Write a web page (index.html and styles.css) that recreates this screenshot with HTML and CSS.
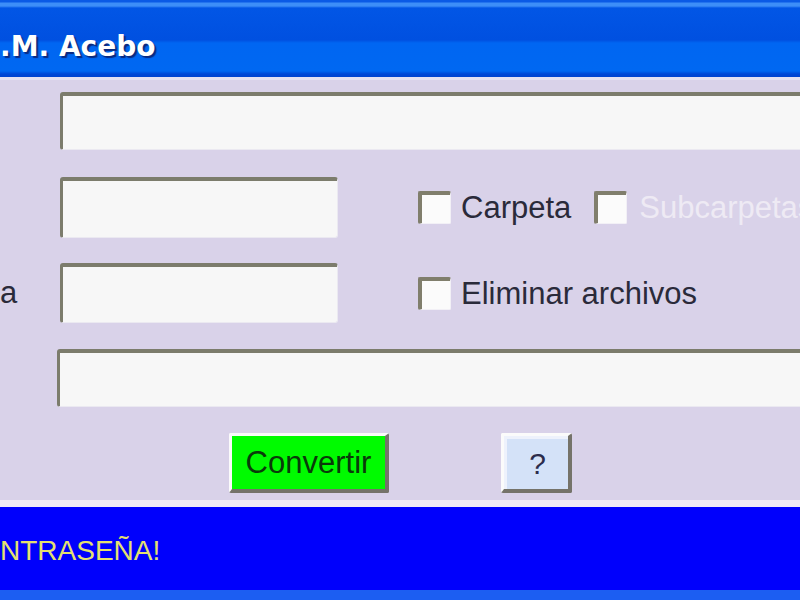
FILE: index.html
```html
<!DOCTYPE html>
<html>
<head>
<meta charset="utf-8">
<link rel="stylesheet" href="styles.css">
</head>
<body>
<div class="window">
  <div class="titlebar"><span class="title">.M. Acebo</span></div>
  <div class="content">
    <div class="row row1">
      <div class="field wide"></div>
    </div>
    <div class="row row2">
      <div class="field short"></div>
      <span class="check first"></span><span class="lbl">Carpeta</span>
      <span class="check second"></span><span class="lbl disabled">Subcarpetas</span>
    </div>
    <div class="row row3">
      <span class="side">a</span>
      <div class="field short"></div>
      <span class="check first"></span><span class="lbl">Eliminar archivos</span>
    </div>
    <div class="row row4">
      <div class="field wide"></div>
    </div>
    <div class="row buttons">
      <button class="btn convert">Convertir</button>
      <button class="btn help"><span class="help-inner">?</span></button>
    </div>
  </div>
  <div class="status"><span class="status-text">NTRASEÑA!</span></div>
</div>
</body>
</html>
```
FILE: styles.css
```css
html, body {
  margin: 0;
  padding: 0;
  width: 800px;
  height: 600px;
  overflow: hidden;
  background: #d9d2e9;
  font-family: "Liberation Sans", Arial, sans-serif;
}
.window {
  width: 800px;
  height: 600px;
  display: flex;
  flex-direction: column;
  overflow: hidden;
}
.titlebar {
  height: 77px;
  flex: none;
  border-bottom: 3px solid #e6e2f2;
  background: linear-gradient(to bottom,
    #0a5ae6 0px, #0a5ae6 2px,
    #3d8ef8 3px, #3d8ef8 6px,
    #0256e6 8px, #0050e0 40px,
    #0066f2 43px, #0068f2 71px,
    #0048d6 74px, #0044d0 77px);
  box-sizing: content-box;
}
.title {
  display: block;
  padding-top: 33px;
  margin-left: 0;
  font-family: "DejaVu Sans", Verdana, sans-serif;
  font-size: 28px;
  line-height: 28px;
  font-weight: bold;
  color: #ffffff;
  text-shadow: 2px 2px 1px #0a2a80;
  white-space: nowrap;
}
.content {
  flex: none;
  height: 420px;
  box-sizing: border-box;
  padding-top: 12px;
  display: flex;
  flex-direction: column;
}
.row {
  display: flex;
  align-items: center;
  flex: none;
}
.row1 { height: 58px; padding-left: 60px; margin-right: -30px; }
.row2 { height: 61px; margin-top: 27px; padding-left: 60px; }
.row3 { height: 60px; margin-top: 25px; }
.row4 { height: 58px; margin-top: 26px; padding-left: 57px; margin-right: -30px; }
.buttons { height: 60px; margin-top: 26px; padding-left: 229px; }

.field {
  box-sizing: border-box;
  height: 100%;
  background: #f7f7f7;
  border-top: 4px solid #7c7c6c;
  border-left: 3px solid #7c7c6c;
  border-right: 1px solid #ebe9f1;
  border-bottom: 1px solid #ebe9f1;
  border-radius: 3px;
}
.wide { flex: 1; }
.short { width: 278px; flex: none; }
.side {
  width: 60px;
  flex: none;
  font-size: 31px;
  color: #2a2a3a;
}
.check {
  box-sizing: border-box;
  width: 33px;
  height: 33px;
  flex: none;
  background: #fbfbfb;
  border-top: 4px solid #807e6c;
  border-left: 4px solid #807e6c;
  border-right: 1px solid #f2f0f6;
  border-bottom: 1px solid #f2f0f6;
  border-radius: 2px;
}
.check.first { margin-left: 80px; }
.check.second { margin-left: 23px; }
.lbl {
  margin-left: 10px;
  font-size: 31px;
  color: #2a2a3a;
  white-space: nowrap;
  line-height: 1;
  flex: none;
}
.lbl.disabled {
  color: #eeeaf4;
  margin-left: 12px;
}

.btn {
  box-sizing: border-box;
  height: 60px;
  padding: 0;
  font-family: "Liberation Sans", Arial, sans-serif;
  font-size: 31px;
  border-top: 3px solid #fbfbfb;
  border-left: 3px solid #fbfbfb;
  border-right: 4px solid #75736a;
  border-bottom: 4px solid #75736a;
  border-radius: 2px;
  display: flex;
  align-items: center;
  justify-content: center;
  flex: none;
}
.convert {
  width: 160px;
  background: #00fb00;
  color: #0a3a0a;
}
.help {
  width: 71px;
  margin-left: 112px;
  background: #eef2fc;
  color: #2c2c4c;
  padding: 3px 0 0 3px;
}
.help-inner {
  width: 100%;
  height: 100%;
  background: #d4e2f8;
  display: flex;
  align-items: center;
  justify-content: center;
  font-size: 30px;
}

.status {
  flex: none;
  height: 83px;
  border-top: 7px solid #eeeaf6;
  border-bottom: 10px solid #1c5ef2;
  background: #0000fc;
  display: flex;
  align-items: center;
}
.status-text {
  font-size: 28px;
  color: #e4e070;
  padding-top: 4px;
  white-space: nowrap;
}
```
